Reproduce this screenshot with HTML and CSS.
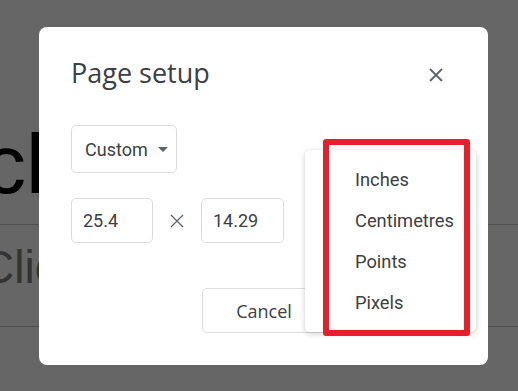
FILE: index.html
```html
<!DOCTYPE html>
<html>
<head>
<meta charset="utf-8">
<link rel="stylesheet" href="styles.css">
</head>
<body>
<div class="slide">
  <div class="slide-title">ck</div>
  <div class="slide-rule"></div>
  <div class="slide-sub">Clic</div>
  <div class="slide-rule"></div>
</div>
<div class="scrim"></div>
<div class="dialog">
  <div class="dialog-header">
    <h1 class="dialog-title">Page setup</h1>
    <button class="close-btn" aria-label="Close">
      <svg width="14" height="14" viewBox="0 0 14 14"><path d="M1 1L13 13M13 1L1 13" stroke="#5f6368" stroke-width="1.8" fill="none"/></svg>
    </button>
  </div>
  <div class="select">
    <span class="select-label">Custom</span>
    <span class="caret"></span>
  </div>
  <div class="size-row">
    <div class="field">25.4</div>
    <svg class="times" width="14" height="14" viewBox="0 0 14 14"><path d="M1 1L13 13M13 1L1 13" stroke="#5f6368" stroke-width="1.3" fill="none"/></svg>
    <div class="field">14.29</div>
  </div>
  <div class="actions">
    <button class="btn">Cancel</button>
  </div>
  <div class="menu">
    <div class="menu-item">Inches</div>
    <div class="menu-item">Centimetres</div>
    <div class="menu-item">Points</div>
    <div class="menu-item">Pixels</div>
  </div>
  <div class="highlight"></div>
</div>
</body>
</html>
```
FILE: styles.css
```css
html, body {
  margin: 0;
  padding: 0;
}
body {
  width: 518px;
  height: 391px;
  overflow: hidden;
  position: relative;
  background: #ffffff;
  font-family: Roboto, "Liberation Sans", sans-serif;
}
.slide {
  padding-top: 122px;
}
.slide-title {
  font-family: "Liberation Sans", Arial, sans-serif;
  font-size: 84px;
  line-height: 84px;
  height: 84px;
  color: #000;
  margin-left: -16px;
}
.slide-rule {
  height: 1px;
  background: #c8c8c8;
  margin-top: 18px;
}
.slide-sub {
  font-family: "Liberation Sans", Arial, sans-serif;
  font-size: 46px;
  line-height: 46px;
  height: 46px;
  color: #808080;
  margin-left: -19px;
  margin-top: 19px;
}
.slide-sub + .slide-rule {
  margin-top: 36px;
}
.scrim {
  position: absolute;
  inset: 0;
  background: rgba(0, 0, 0, 0.6);
}
.dialog {
  position: absolute;
  left: 39px;
  top: 27px;
  width: 449px;
  height: 338px;
  box-sizing: border-box;
  background: #fff;
  border-radius: 8px;
  padding: 30px 32px 0 32px;
}
.dialog-header {
  display: flex;
  justify-content: space-between;
  align-items: flex-start;
}
.dialog-title {
  margin: 0;
  font-family: "Open Sans", sans-serif;
  font-weight: 400;
  font-size: 27px;
  line-height: 32px;
  color: #3c4043;
}
.close-btn {
  width: 24px;
  height: 24px;
  margin-top: 6px;
  margin-right: 8px;
  padding: 0;
  border: 0;
  background: none;
  display: flex;
  align-items: center;
  justify-content: center;
}
.select {
  margin-top: 36px;
  width: 106px;
  height: 48px;
  box-sizing: border-box;
  border: 1px solid #dadce0;
  border-radius: 5px;
  display: flex;
  align-items: center;
  padding-left: 13px;
  gap: 10px;
}
.select-label {
  font-size: 18px;
  color: #3c4043;
}
.caret {
  width: 0;
  height: 0;
  border-left: 5px solid transparent;
  border-right: 5px solid transparent;
  border-top: 5px solid #5f6368;
}
.size-row {
  margin-top: 25px;
  display: flex;
  align-items: center;
  gap: 17px;
}
.field {
  width: 82px;
  height: 45px;
  box-sizing: border-box;
  border: 1px solid #dadce0;
  border-radius: 5px;
  padding-left: 11px;
  display: flex;
  align-items: center;
  font-size: 18px;
  color: #3c4043;
}
.field + .times + .field {
  width: 83px;
}
.actions {
  margin-top: 45px;
  display: flex;
  padding-left: 131px;
}
.btn {
  height: 45px;
  width: 124px;
  box-sizing: border-box;
  border: 1px solid #dadce0;
  border-radius: 5px;
  background: #fff;
  font-family: "Open Sans", sans-serif;
  font-weight: 500;
  font-size: 18px;
  color: #3c4043;
  padding: 0;
}
.menu {
  position: absolute;
  left: 266px;
  top: 123px;
  width: 171px;
  box-sizing: border-box;
  padding: 9px 0;
  background: #fff;
  border-radius: 5px;
  box-shadow: 0 2px 6px rgba(0, 0, 0, 0.18), 0 0 2px rgba(0, 0, 0, 0.06);
}
.menu-item {
  height: 41px;
  line-height: 41px;
  padding-left: 50px;
  font-size: 18.3px;
  color: #3c4043;
  white-space: nowrap;
}
.highlight {
  position: absolute;
  left: 284px;
  top: 112px;
  width: 147px;
  height: 197px;
  box-sizing: border-box;
  border: 6px solid #e5202a;
  border-radius: 3px;
}
```
